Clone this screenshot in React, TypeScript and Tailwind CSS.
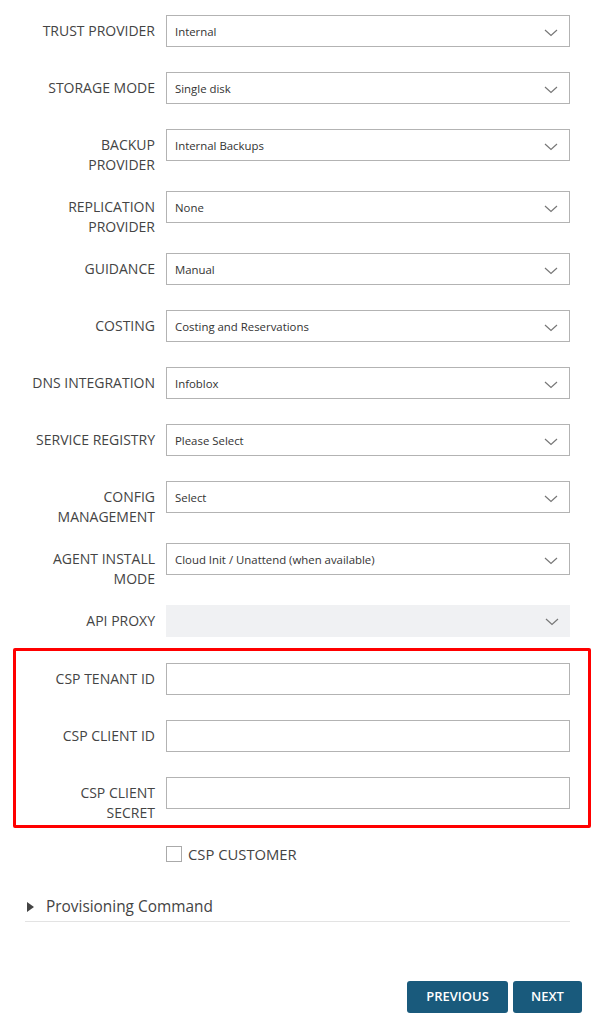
import React from "react";

const rows: { label: string[]; value: string; disabled?: boolean }[] = [
  { label: ["TRUST PROVIDER"], value: "Internal" },
  { label: ["STORAGE MODE"], value: "Single disk" },
  { label: ["BACKUP", "PROVIDER"], value: "Internal Backups" },
  { label: ["REPLICATION", "PROVIDER"], value: "None" },
  { label: ["GUIDANCE"], value: "Manual" },
  { label: ["COSTING"], value: "Costing and Reservations" },
  { label: ["DNS INTEGRATION"], value: "Infoblox" },
  { label: ["SERVICE REGISTRY"], value: "Please Select" },
  { label: ["CONFIG", "MANAGEMENT"], value: "Select" },
  { label: ["AGENT INSTALL", "MODE"], value: "Cloud Init / Unattend (when available)" },
  { label: ["API PROXY"], value: "", disabled: true },
];

const Chevron = () => (
  <svg width="14" height="8" viewBox="0 0 14 8" className="absolute right-[11px] top-[13px]">
    <path d="M1 1 L7 6.5 L13 1" fill="none" stroke="#777" strokeWidth="1.2" />
  </svg>
);

const Label = ({ lines }: { lines: string[] }) => (
  <div className="w-[130px] shrink-0 pt-[6px] text-right text-[14px] leading-[20px] text-[#444]">
    {lines.map((l) => (
      <div key={l} className="whitespace-nowrap">{l}</div>
    ))}
  </div>
);

const App = () => {
  return (
    <div className="min-h-[1027px] w-[597px] bg-white font-['Open_Sans',sans-serif]">
      <div className="px-[25px] pt-[15px] w-[597px]">
        {rows.map((r) => (
          <div key={r.label.join(" ")} className={`flex gap-[11px] ${r.label.length > 1 ? "mb-[16px]" : "mb-[25px]"}`}>
            <Label lines={r.label} />
            <div
              className={`relative h-[32px] w-[404px] ${
                r.disabled ? "bg-[#f0f1f3]" : "border border-[#b3b3b3] bg-white"
              }`}
            >
              <span className="absolute left-[8px] top-[8px] text-[11.4px] leading-[16px] text-[#333]">{r.value}</span>
              <Chevron />
            </div>
          </div>
        ))}

        <div className="-ml-[12px] -mr-[19px] -mt-[14px] rounded-[2px] border-[3px] border-[#ff0000] pl-[9px] pr-[16px] pt-[12px] pb-[2px]">
          <div className="mb-[25px] flex gap-[11px]">
            <Label lines={["CSP TENANT ID"]} />
            <div className="h-[32px] w-[404px] border border-[#b3b3b3]" />
          </div>
          <div className="mb-[25px] flex gap-[11px]">
            <Label lines={["CSP CLIENT ID"]} />
            <div className="h-[32px] w-[404px] border border-[#b3b3b3]" />
          </div>
          <div className="flex gap-[11px]">
            <Label lines={["CSP CLIENT", "SECRET"]} />
            <div className="h-[32px] w-[404px] border border-[#b3b3b3]" />
          </div>
        </div>

        <div className="mt-[15px] flex items-center pl-[141px]">
          <div className="h-[16px] w-[16px] border border-[#aaa] bg-white" />
          <span className="ml-[6px] text-[14.8px] text-[#444]">CSP CUSTOMER</span>
        </div>

        <div className="mt-[31px] flex w-[545px] items-center border-b border-[#e3e3e3] pb-[3px]">
          <svg width="8" height="10" viewBox="0 0 8 10" className="ml-[2px]">
            <path d="M0 0 L7 5 L0 10 Z" fill="#444" />
          </svg>
          <span className="ml-[11px] text-[15.4px] leading-[22px] text-[#444]">Provisioning Command</span>
        </div>
      </div>

      <div className="mt-[59px] flex justify-end gap-[5px] pr-[15px]">
        <button className="h-[32px] w-[101px] rounded-[3px] bg-[#195a7c] text-[13px] font-semibold text-white">
          PREVIOUS
        </button>
        <button className="h-[32px] w-[69px] rounded-[3px] bg-[#195a7c] text-[13px] font-semibold text-white">
          NEXT
        </button>
      </div>
    </div>
  );
};

export default App;
